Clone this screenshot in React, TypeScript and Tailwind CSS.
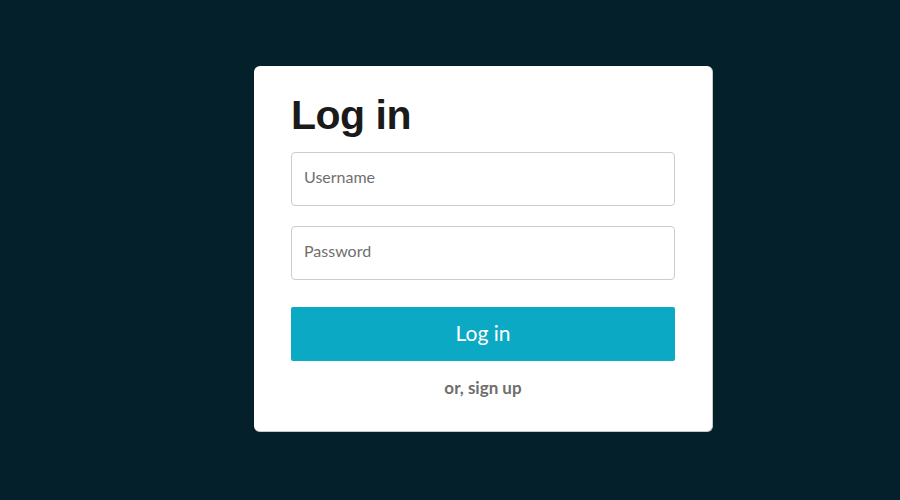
export default function App() {
  return (
    <div className="min-h-[500px] w-full bg-[#04202b] pl-[254px] pt-[66px]">
      <div className="w-[459px] rounded-[6px] border-b border-r border-[#c8c8c8] bg-white px-[37px] pt-[24px] pb-[31px]">
        <h1
          className="mb-[12px] text-[41px] font-bold leading-[50px] tracking-[-0.5px] text-[#1a1a1a]"
          style={{ fontFamily: '"Liberation Sans", Arial, sans-serif' }}
        >
          Log in
        </h1>
        <div className="flex flex-col gap-[20px]" style={{ fontFamily: 'Lato, sans-serif' }}>
          <input
            type="text"
            placeholder="Username"
            className="h-[54px] w-full rounded-[4px] border border-[#cccccc] px-[12px] pb-[6px] text-[16px] text-[#333] placeholder:text-[#6f6f6f] outline-none"
          />
          <input
            type="password"
            placeholder="Password"
            className="h-[54px] w-full rounded-[4px] border border-[#cccccc] px-[12px] pb-[6px] text-[16px] text-[#333] placeholder:text-[#6f6f6f] outline-none"
          />
        </div>
        <div style={{ fontFamily: 'Lato, sans-serif' }}>
          <button className="mt-[27px] h-[54px] w-full rounded-[2px] bg-[#0ba9c4] pb-[2px] text-[21px] text-white">
            Log in
          </button>
          <div className="mt-[15px] text-center text-[17px] font-bold leading-[24px] text-[#6e6e6e]">
            or, sign up
          </div>
        </div>
      </div>
    </div>
  );
}
